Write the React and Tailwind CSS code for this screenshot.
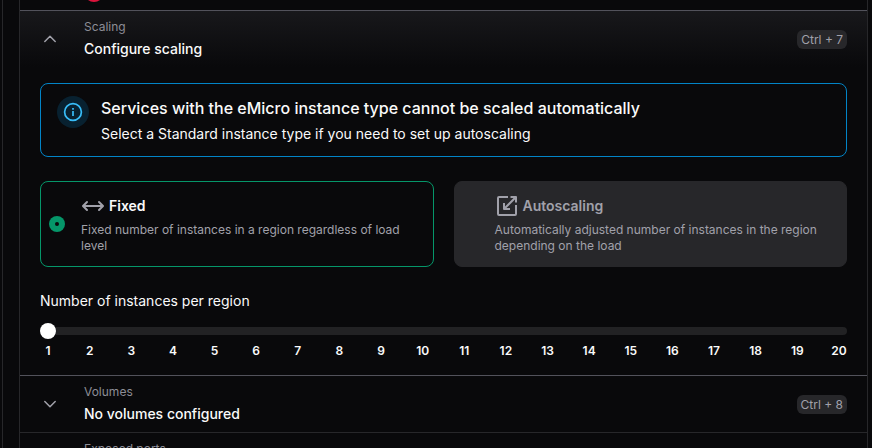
import React from 'react';

function Chevron({ up }) {
  return (
    <svg viewBox="0 0 20 20" className="size-5 text-[#a1a1aa]" fill="none" stroke="currentColor" strokeWidth="1.5" strokeLinecap="round" strokeLinejoin="round">
      <path d={up ? 'M4.8 12.5 10 7.3l5.2 5.2' : 'm4.8 7.5 5.2 5.2 5.2-5.2'} />
    </svg>
  );
}

function SectionHeader({ label, title, shortcut, open, className = '' }) {
  return (
    <div className={`flex h-14 items-center gap-6 px-5 ${className}`}>
      <Chevron up={open} />
      <div className="flex flex-1 flex-col gap-1">
        <div className="text-xs text-[#8d8d96]">{label}</div>
        <div className="text-sm font-medium text-[#fafafa]">{title}</div>
      </div>
      <kbd className="rounded-md bg-[#27272a] px-1 py-px font-[inherit] text-xs leading-[17px] text-[#a1a1aa]">{shortcut}</kbd>
    </div>
  );
}

function InfoIcon() {
  return (
    <div className="flex size-8 shrink-0 items-center justify-center rounded-full bg-[#082130]">
      <svg viewBox="0 0 20 20" className="size-5 text-[#38bdf8]" fill="none" stroke="currentColor" strokeWidth="1.7">
        <circle cx="10" cy="10" r="8.4" />
        <path d="M10 9v5M10 6v1.7" />
      </svg>
    </div>
  );
}

function FixedIcon() {
  return (
    <svg viewBox="0 0 24 24" className="size-6 text-[#a1a1aa]" fill="none" stroke="currentColor" strokeWidth="2" strokeLinecap="round" strokeLinejoin="round">
      <path d="M2.2 12h19.6M6 8l-4 4 4 4M18 8l4 4-4 4" />
    </svg>
  );
}

function AutoscalingIcon() {
  return (
    <svg viewBox="0 0 24 24" className="size-6 text-[#a1a1aa]" fill="none" stroke="currentColor" strokeWidth="2" strokeLinejoin="round">
      <path d="M13 3H4a1 1 0 0 0-1 1v16a1 1 0 0 0 1 1h16a1 1 0 0 0 1-1v-9" />
      <path d="M21 3 9 15M15.5 3H21v5.5M9 9v6h6" />
    </svg>
  );
}

function Option({ icon, title, description, selected }) {
  return (
    <div className={`flex flex-1 items-center gap-4 rounded-lg border py-3 pr-3 pl-2 ${selected ? 'border-[#059669]' : 'border-[#27272a] bg-[#27272a]'}`}>
      <div className={`flex size-4 shrink-0 items-center justify-center rounded-full ${selected ? 'bg-[#059669]' : ''}`}>
        {selected && <div className="size-1 rounded-full bg-[#09090b]" />}
      </div>
      <div className="flex flex-col gap-1">
        <div className="flex items-center gap-1">
          {icon}
          <span className={`text-sm font-semibold ${selected ? 'text-[#fafafa]' : 'text-[#a1a1aa]'}`}>{title}</span>
        </div>
        <div className="text-xs text-[#a1a1aa]">{description}</div>
      </div>
    </div>
  );
}

function Slider() {
  return (
    <div className="mt-3">
      <div className="flex h-4 items-center rounded-full">
        <div className="size-4 shrink-0 rounded-full bg-white" />
        <div className="h-2 flex-1 rounded-r-full bg-[#222224]" />
      </div>
      <div className="mt-1 flex justify-between text-xs font-semibold text-[#fafafa]">
        {Array.from({ length: 20 }, (_, i) => (
          <span key={i} className="w-4 text-center">{i + 1}</span>
        ))}
      </div>
    </div>
  );
}

export default function App() {
  return (
    <div className="flex h-[448px] w-[872px] overflow-hidden bg-[#09090b] pl-[2px] font-['Inter',sans-serif]">
      <div className="w-px shrink-0 bg-[#27272a]" />
      <main className="ml-4 w-[849px] shrink-0 border-x border-[#27272a]">
        <div className="flex h-[10px] items-start overflow-hidden pl-16">
          <div className="-mt-[18px] size-5 shrink-0 rounded-full bg-[#dc143c]" />
        </div>
        <section className="border-y border-[#52525b]">
          <SectionHeader open label="Scaling" title="Configure scaling" shortcut="Ctrl + 7" className="bg-linear-to-b from-[#18181b] to-[#09090b]" />
          <div className="px-5 py-4">
            <div className="flex gap-3 rounded-lg border border-[#0284c7] px-4 py-3">
              <InfoIcon />
              <div className="flex flex-col gap-1 text-[#fafafa]">
                <div className="text-base font-medium">Services with the eMicro instance type cannot be scaled automatically</div>
                <div className="text-sm">Select a Standard instance type if you need to set up autoscaling</div>
              </div>
            </div>
            <div className="mt-6 flex gap-5">
              <Option selected icon={<FixedIcon />} title="Fixed" description="Fixed number of instances in a region regardless of load level" />
              <Option icon={<AutoscalingIcon />} title="Autoscaling" description="Automatically adjusted number of instances in the region depending on the load" />
            </div>
            <div className="mt-6 text-sm text-[#fafafa]">Number of instances per region</div>
            <Slider />
          </div>
        </section>
        <SectionHeader label="Volumes" title="No volumes configured" shortcut="Ctrl + 8" />
        <div className="border-t border-[#27272a] pt-2 pl-16 text-xs text-[#8d8d96]">Exposed ports</div>
      </main>
    </div>
  );
}
